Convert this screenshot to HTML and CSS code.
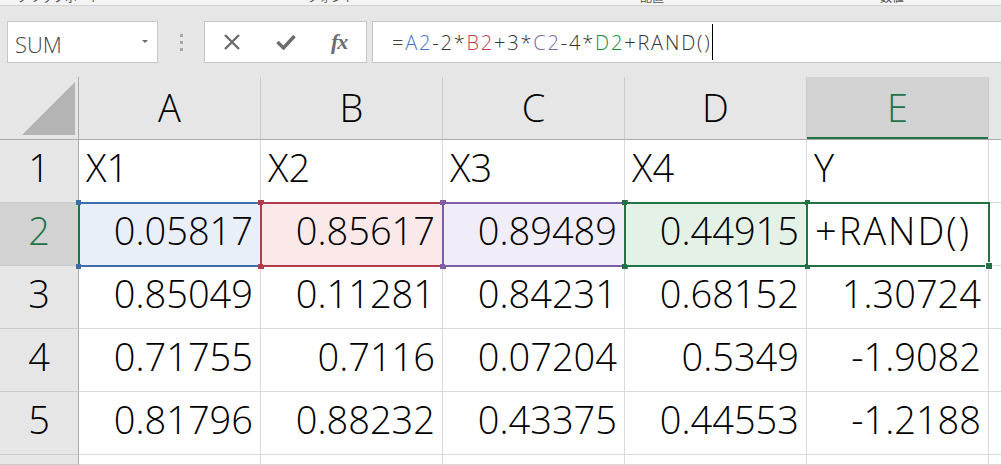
FILE: index.html
```html
<!DOCTYPE html>
<html lang="ja">
<head>
<meta charset="utf-8">
<title>Excel</title>
<link rel="stylesheet" href="styles.css">
</head>
<body>
<div class="ribbon">
  <span class="rl rl1">クリップボード</span>
  <span class="rl rl2">フォント</span>
  <span class="rl rl3">配置</span>
  <span class="rl rl4">数値</span>
</div>
<div class="fbar">
  <div class="namebox"><span class="nb-text">SUM</span><span class="nb-arrow"></span></div>
  <div class="grip"><i></i><i></i><i></i></div>
  <div class="fxbox">
    <span class="slot"><svg width="18" height="18" viewBox="0 0 18 18"><path d="M2 2 L16 16 M16 2 L2 16" stroke="#6b6b6b" stroke-width="2.4" fill="none"/></svg></span>
    <span class="slot"><svg width="20" height="16" viewBox="0 0 20 16"><path d="M1.5 8 L7.5 14 L18.5 2" stroke="#6b6b6b" stroke-width="3.4" fill="none" stroke-linejoin="miter"/></svg></span>
    <span class="slot"><span class="fx">fx</span></span>
  </div>
  <div class="finput"><span class="eq">=</span><span class="ra">A2</span>-2*<span class="rb">B2</span>+3*<span class="rc">C2</span>-4*<span class="rd">D2</span>+RAND()<span class="caret"></span></div>
</div>
<div class="sheet">
  <div class="corner"><svg width="78" height="62" viewBox="0 0 78 62"><polygon points="22,58 75,58 75,5" fill="#b4b4b4"/></svg></div>
  <div class="h">A</div>
  <div class="h">B</div>
  <div class="h">C</div>
  <div class="h">D</div>
  <div class="h hsel">E</div>
  <div class="h hlast"></div>

  <div class="rh">1</div>
  <div class="c txt">X1</div>
  <div class="c txt">X2</div>
  <div class="c txt">X3</div>
  <div class="c txt">X4</div>
  <div class="c txt">Y</div>
  <div class="c"></div>

  <div class="rh rhsel">2</div>
  <div class="c num ref ref-a">0.05817<span class="frame"><i class="hd tl"></i><i class="hd tr"></i><i class="hd bl"></i><i class="hd br"></i></span></div>
  <div class="c num ref ref-b">0.85617<span class="frame"><i class="hd tl"></i><i class="hd tr"></i><i class="hd bl"></i><i class="hd br"></i></span></div>
  <div class="c num ref ref-c">0.89489<span class="frame"><i class="hd tl"></i><i class="hd tr"></i><i class="hd bl"></i><i class="hd br"></i></span></div>
  <div class="c num ref ref-d">0.44915<span class="frame"><i class="hd tl"></i><i class="hd tr"></i><i class="hd bl"></i><i class="hd br"></i></span></div>
  <div class="c txt ref active"><span class="edit">+RAND()</span><span class="frame"><i class="fill"></i></span></div>
  <div class="c"></div>

  <div class="rh">3</div>
  <div class="c num">0.85049</div>
  <div class="c num">0.11281</div>
  <div class="c num">0.84231</div>
  <div class="c num">0.68152</div>
  <div class="c num">1.30724</div>
  <div class="c"></div>

  <div class="rh">4</div>
  <div class="c num">0.71755</div>
  <div class="c num">0.7116</div>
  <div class="c num">0.07204</div>
  <div class="c num">0.5349</div>
  <div class="c num">-1.9082</div>
  <div class="c"></div>

  <div class="rh">5</div>
  <div class="c num">0.81796</div>
  <div class="c num">0.88232</div>
  <div class="c num">0.43375</div>
  <div class="c num">0.44553</div>
  <div class="c num">-1.2188</div>
  <div class="c"></div>

  <div class="rh"></div>
  <div class="c"></div>
  <div class="c"></div>
  <div class="c"></div>
  <div class="c"></div>
  <div class="c"></div>
  <div class="c"></div>
</div>
</body>
</html>
```
FILE: styles.css
```css
html, body {
  margin: 0;
  padding: 0;
}
body {
  width: 1001px;
  height: 465px;
  overflow: hidden;
  background: #e6e6e6;
  font-family: "Open Sans", "Noto Sans CJK JP", sans-serif;
}

/* clipped ribbon labels */
.ribbon {
  height: 5px;
  overflow: hidden;
  background: #f3f3f3;
  border-bottom: 1px solid #d2d2d2;
  display: flex;
  font-family: "Noto Sans CJK JP", sans-serif;
  font-size: 12px;
  line-height: 12px;
  color: #555;
}
.rl {
  display: block;
  margin-top: -9px;
  white-space: nowrap;
}
.rl1 { margin-left: 17px; }
.rl2 { margin-left: 206px; }
.rl3 { margin-left: 285px; }
.rl4 { margin-left: 216px; }

/* formula bar */
.fbar {
  display: flex;
  padding: 15px 0 14px 7px;
  height: 42px;
}
.namebox {
  box-sizing: border-box;
  width: 151px;
  height: 42px;
  background: #fff;
  border: 1px solid #c6c6c6;
  display: flex;
  align-items: center;
  justify-content: space-between;
  padding: 0 9px 0 7px;
}
.nb-text {
  font-size: 22px;
  font-weight: 300;
  color: #444;
  padding-top: 3px;
}
.nb-arrow {
  width: 0;
  height: 0;
  border-left: 3px solid transparent;
  border-right: 3px solid transparent;
  border-top: 3px solid #6a6a6a;
  margin-top: -2px;
}
.grip {
  width: 46px;
  display: flex;
  flex-direction: column;
  align-items: center;
  justify-content: center;
  gap: 4px;
}
.grip i {
  display: block;
  width: 3px;
  height: 3px;
  background: #a8a8a8;
}
.fxbox {
  box-sizing: border-box;
  width: 163px;
  height: 42px;
  background: #fff;
  border: 1px solid #c6c6c6;
  display: flex;
  align-items: center;
}
.slot {
  width: 54px;
  display: flex;
  justify-content: center;
  align-items: center;
}
.slot svg { display: block; }
.fx {
  font-family: "Liberation Serif", serif;
  font-style: italic;
  font-weight: bold;
  font-size: 22px;
  color: #6b6b6b;
  letter-spacing: -1px;
}
.finput {
  box-sizing: border-box;
  flex: 1;
  height: 42px;
  margin-left: 5px;
  margin-right: -2px;
  background: #fff;
  border: 1px solid #c6c6c6;
  display: flex;
  align-items: center;
  padding-left: 19px;
  font-size: 20px;
  font-weight: 300;
  letter-spacing: 1.8px;
  color: #333;
  white-space: nowrap;
}
.eq { color: #444; }
.ra { color: #4472c4; }
.rb { color: #c0404e; }
.rc { color: #8064a2; }
.rd { color: #1e8a3c; }
.caret {
  display: block;
  width: 1px;
  height: 36px;
  background: #000;
}

/* sheet grid */
.sheet {
  display: grid;
  grid-template-columns: 79px repeat(5, 182px) 1fr;
  grid-template-rows: repeat(6, 63px) 10px;
  font-size: 38px;
  font-weight: 300;
  line-height: 1.362;
  color: #000;
}
.sheet > div {
  box-sizing: border-box;
  white-space: nowrap;
}
.corner {
  background: #e6e6e6;
  border-right: 1px solid #ababab;
  border-bottom: 1px solid #ababab;
}
.corner svg { display: block; }
.h {
  background: #e6e6e6;
  border-right: 1px solid #cbcbcb;
  border-bottom: 1px solid #ababab;
  display: flex;
  justify-content: center;
  align-items: flex-end;
  padding-bottom: 5px;
}
.hsel {
  background: #d2d2d2;
  color: #217346;
  box-shadow: inset 0 -2px 0 #217346;
}
.hlast { border-right: none; }
.rh {
  background: #e6e6e6;
  border-right: 1px solid #ababab;
  border-bottom: 1px solid #cbcbcb;
  display: flex;
  justify-content: center;
  align-items: flex-end;
  padding-bottom: 8px;
}
.rhsel {
  background: #d2d2d2;
  color: #217346;
}
.c {
  background: #fff;
  border-right: 1px solid #d9d9d9;
  border-bottom: 1px solid #d9d9d9;
  display: flex;
  align-items: flex-end;
  padding: 0 7px 8px 7px;
}
.num { justify-content: flex-end; }
.txt { justify-content: flex-start; }
.edit { letter-spacing: 2px; }

/* reference highlights */
.ref { position: relative; }
.frame {
  position: absolute;
  left: -1px;
  top: -1px;
  right: -2px;
  bottom: -2px;
  border: 2px solid var(--rc);
}
.hd {
  position: absolute;
  width: 5px;
  height: 5px;
  background: var(--rc);
}
.tl { left: -4px; top: -4px; }
.tr { right: -4px; top: -4px; }
.bl { left: -4px; bottom: -4px; }
.br { right: -4px; bottom: -4px; }
.ref-a { --rc: #3e6eaa; background: #e9eff8; }
.ref-a .frame { border-left-color: #217346; }
.ref-b { --rc: #b13c4a; background: #fbe9ea; }
.ref-c { --rc: #7d5fa8; background: #f1edf8; }
.ref-d { --rc: #217346; background: #e3f1e6; }
.active { --rc: #217346; padding-left: 8px; }
.fill {
  position: absolute;
  right: -5px;
  bottom: -5px;
  width: 6px;
  height: 6px;
  background: #217346;
  border: 1px solid #fff;
}
```
